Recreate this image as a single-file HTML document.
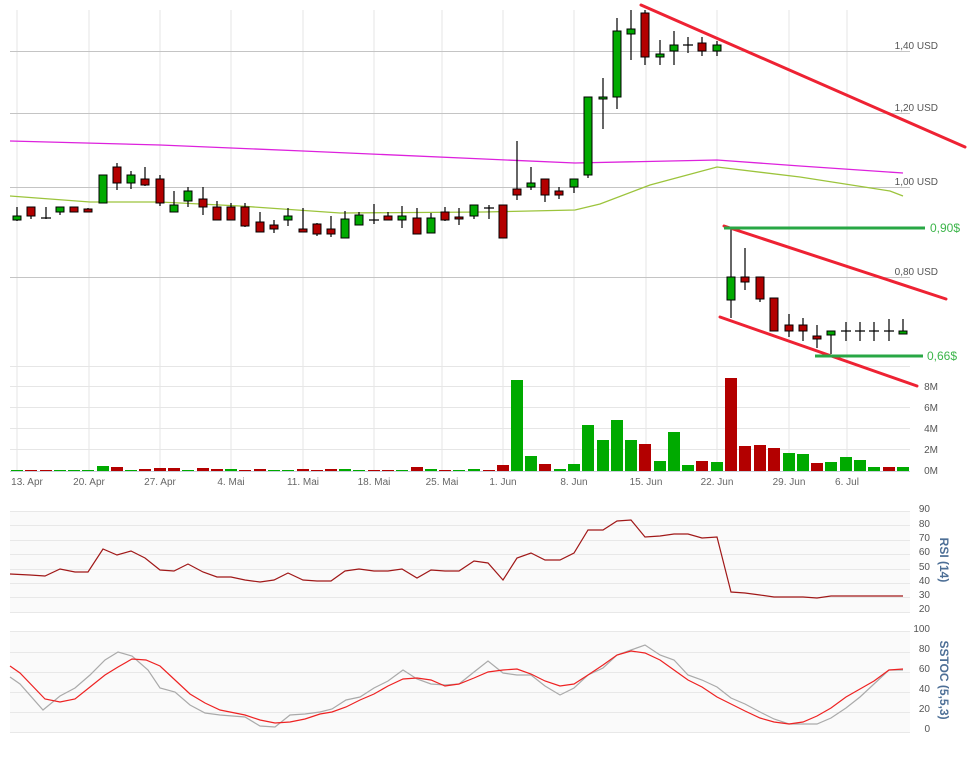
<!DOCTYPE html>
<html><head><meta charset="utf-8"><style>
html,body{margin:0;padding:0;background:#fff;}
svg{display:block;font-family:"Liberation Sans",sans-serif;}
.ax{font-size:10px;fill:#555;}
.dl{font-size:10px;fill:#666;}
</style></head><body>
<svg width="968" height="765" viewBox="0 0 968 765" xmlns="http://www.w3.org/2000/svg">
<rect width="968" height="765" fill="#fff"/>
<!-- vertical grid -->
<g stroke="#eeeeee" stroke-width="1.5">
<line x1="17" y1="10" x2="17" y2="472"/><line x1="89" y1="10" x2="89" y2="472"/><line x1="160" y1="10" x2="160" y2="472"/><line x1="231" y1="10" x2="231" y2="472"/><line x1="303" y1="10" x2="303" y2="472"/><line x1="374" y1="10" x2="374" y2="472"/><line x1="442" y1="10" x2="442" y2="472"/><line x1="503" y1="10" x2="503" y2="472"/><line x1="574" y1="10" x2="574" y2="472"/><line x1="646" y1="10" x2="646" y2="472"/><line x1="717" y1="10" x2="717" y2="472"/><line x1="789" y1="10" x2="789" y2="472"/><line x1="847" y1="10" x2="847" y2="472"/>
</g>
<!-- price grid -->
<g stroke="#c4c4c4" stroke-width="1">
<line x1="10" y1="51.5" x2="910" y2="51.5"/><line x1="10" y1="113.5" x2="910" y2="113.5"/><line x1="10" y1="187.5" x2="910" y2="187.5"/><line x1="10" y1="277.5" x2="910" y2="277.5"/>
</g>
<g class="ax" text-anchor="end">
<text x="938" y="49">1,40 USD</text><text x="938" y="111">1,20 USD</text><text x="938" y="185">1,00 USD</text><text x="938" y="275">0,80 USD</text>
</g>
<!-- volume grid -->
<g stroke="#e6e6e6" stroke-width="1">
<line x1="10" y1="366.5" x2="910" y2="366.5"/><line x1="10" y1="386.5" x2="910" y2="386.5"/><line x1="10" y1="407.5" x2="910" y2="407.5"/><line x1="10" y1="428.5" x2="910" y2="428.5"/><line x1="10" y1="449.5" x2="910" y2="449.5"/>
</g>
<line x1="10" y1="471.5" x2="910" y2="471.5" stroke="#c8d0dc"/>
<g class="ax" text-anchor="end">
<text x="938" y="390">8M</text><text x="938" y="411">6M</text><text x="938" y="432">4M</text><text x="938" y="453">2M</text><text x="938" y="474">0M</text>
</g>
<!-- MAs -->
<polyline fill="none" stroke="#dd22dd" stroke-width="1.3" points="10,141 160,145 303,151 484,159 575,163 717,160 800,166 903,173"/>
<polyline fill="none" stroke="#9cc43c" stroke-width="1.3" points="10,196 90,202 160,202 240,206 340,213 484,212 575,210 600,204 650,185 717,167 800,177 890,191 903,196"/>
<!-- volumes -->
<g>
<rect x="11" y="470" width="12" height="1" fill="#00aa00"/><rect x="25" y="470" width="12" height="1" fill="#b30000"/><rect x="40" y="470" width="12" height="1" fill="#b30000"/><rect x="54" y="470" width="12" height="1" fill="#00aa00"/><rect x="68" y="470" width="12" height="1" fill="#00aa00"/><rect x="82" y="470" width="12" height="1" fill="#00aa00"/>
<rect x="97" y="466" width="12" height="5" fill="#00aa00"/><rect x="111" y="467" width="12" height="4" fill="#b30000"/><rect x="125" y="470" width="12" height="1" fill="#00aa00"/><rect x="139" y="469" width="12" height="2" fill="#b30000"/><rect x="154" y="468" width="12" height="3" fill="#b30000"/><rect x="168" y="468" width="12" height="3" fill="#b30000"/><rect x="182" y="470" width="12" height="1" fill="#00aa00"/><rect x="197" y="468" width="12" height="3" fill="#b30000"/><rect x="211" y="469" width="12" height="2" fill="#b30000"/><rect x="225" y="469" width="12" height="2" fill="#00aa00"/><rect x="239" y="470" width="12" height="1" fill="#b30000"/><rect x="254" y="469" width="12" height="2" fill="#b30000"/><rect x="268" y="470" width="12" height="1" fill="#00aa00"/><rect x="282" y="470" width="12" height="1" fill="#00aa00"/><rect x="297" y="469" width="12" height="2" fill="#b30000"/><rect x="311" y="470" width="12" height="1" fill="#b30000"/><rect x="325" y="469" width="12" height="2" fill="#b30000"/><rect x="339" y="469" width="12" height="2" fill="#00aa00"/><rect x="353" y="470" width="12" height="1" fill="#00aa00"/><rect x="368" y="470" width="12" height="1" fill="#b30000"/><rect x="382" y="470" width="12" height="1" fill="#b30000"/><rect x="396" y="470" width="12" height="1" fill="#00aa00"/><rect x="411" y="467" width="12" height="4" fill="#b30000"/><rect x="425" y="469" width="12" height="2" fill="#00aa00"/><rect x="439" y="470" width="12" height="1" fill="#b30000"/><rect x="453" y="470" width="12" height="1" fill="#00aa00"/><rect x="468" y="469" width="12" height="2" fill="#00aa00"/><rect x="483" y="470" width="12" height="1" fill="#b30000"/>
<rect x="497" y="465" width="12" height="6" fill="#b30000"/><rect x="511" y="380" width="12" height="91" fill="#00aa00"/><rect x="525" y="456" width="12" height="15" fill="#00aa00"/><rect x="539" y="464" width="12" height="7" fill="#b30000"/><rect x="554" y="469" width="12" height="2" fill="#00aa00"/><rect x="568" y="464" width="12" height="7" fill="#00aa00"/><rect x="582" y="425" width="12" height="46" fill="#00aa00"/><rect x="597" y="440" width="12" height="31" fill="#00aa00"/><rect x="611" y="420" width="12" height="51" fill="#00aa00"/><rect x="625" y="440" width="12" height="31" fill="#00aa00"/><rect x="639" y="444" width="12" height="27" fill="#b30000"/><rect x="654" y="461" width="12" height="10" fill="#00aa00"/><rect x="668" y="432" width="12" height="39" fill="#00aa00"/><rect x="682" y="465" width="12" height="6" fill="#00aa00"/><rect x="696" y="461" width="12" height="10" fill="#b30000"/><rect x="711" y="462" width="12" height="9" fill="#00aa00"/><rect x="725" y="378" width="12" height="93" fill="#b30000"/><rect x="739" y="446" width="12" height="25" fill="#b30000"/><rect x="754" y="445" width="12" height="26" fill="#b30000"/><rect x="768" y="448" width="12" height="23" fill="#b30000"/><rect x="783" y="453" width="12" height="18" fill="#00aa00"/><rect x="797" y="454" width="12" height="17" fill="#00aa00"/><rect x="811" y="463" width="12" height="8" fill="#b30000"/><rect x="825" y="462" width="12" height="9" fill="#00aa00"/><rect x="840" y="457" width="12" height="14" fill="#00aa00"/><rect x="854" y="460" width="12" height="11" fill="#00aa00"/><rect x="868" y="467" width="12" height="4" fill="#00aa00"/><rect x="883" y="467" width="12" height="4" fill="#b30000"/><rect x="897" y="467" width="12" height="4" fill="#00aa00"/>
</g>
<!-- wicks -->
<path stroke="#000" stroke-width="1.2" fill="none" d="M17,207V221M31,207V219M46,207V219M60,207V215M74,207V212M88,208V212M103,175V203M117,163V190M131,171V189M145,167V186M160,175V206M174,191V212M188,187V207M203,187V215M217,201V220M231,203V220M245,203V227M260,212V232M274,220V233M288,208V226M303,208V232M317,223V236M331,216V237M345,211V238M359,212V225M374,204V224M388,212V220M402,206V228M417,208V234M431,213V233M445,207V221M459,208V225M474,205V219M489,205V219M503,205V238M517,141V200M531,167V190M545,179V202M559,187V199M574,179V193M588,97V178M603,78V129M617,18V109M631,10V60M645,10V65M660,40V65M674,31V65M688,37V53M702,37V56M717,41V56M731,228V318M745,248V290M760,277V302M774,298V331M789,314V337M803,318V341M817,325V348M831,331V354M846,322V341M860,322V341M874,322V341M889,319V341M903,319V334"/>
<!-- dojis -->
<path stroke="#000" stroke-width="1.2" d="M41,218H51M369,220H379M484,208H494M683,45H693M841,331H851M855,331H865M869,331H879M884,331H894"/>
<!-- bodies -->
<g stroke="#000" stroke-width="1">
<g fill="#00aa00">
<rect x="13" y="216" width="8" height="4"/><rect x="56" y="207" width="8" height="5"/><rect x="99" y="175" width="8" height="28"/><rect x="127" y="175" width="8" height="8"/><rect x="170" y="205" width="8" height="7"/><rect x="184" y="191" width="8" height="10"/><rect x="284" y="216" width="8" height="4"/><rect x="341" y="219" width="8" height="19"/><rect x="355" y="215" width="8" height="10"/><rect x="398" y="216" width="8" height="4"/><rect x="427" y="218" width="8" height="15"/><rect x="470" y="205" width="8" height="11"/><rect x="527" y="183" width="8" height="4"/><rect x="570" y="179" width="8" height="8"/><rect x="584" y="97" width="8" height="78"/><rect x="599" y="97" width="8" height="2"/><rect x="613" y="31" width="8" height="66"/><rect x="627" y="29" width="8" height="5"/><rect x="656" y="54" width="8" height="3"/><rect x="670" y="45" width="8" height="6"/><rect x="713" y="45" width="8" height="6"/><rect x="727" y="277" width="8" height="23"/><rect x="827" y="331" width="8" height="4"/><rect x="899" y="331" width="8" height="3"/>
</g>
<g fill="#b30000">
<rect x="27" y="207" width="8" height="9"/><rect x="70" y="207" width="8" height="5"/><rect x="84" y="209" width="8" height="3"/><rect x="113" y="167" width="8" height="16"/><rect x="141" y="179" width="8" height="6"/><rect x="156" y="179" width="8" height="24"/><rect x="199" y="199" width="8" height="8"/><rect x="213" y="207" width="8" height="13"/><rect x="227" y="207" width="8" height="13"/><rect x="241" y="207" width="8" height="19"/><rect x="256" y="222" width="8" height="10"/><rect x="270" y="225" width="8" height="4"/><rect x="299" y="229" width="8" height="3"/><rect x="313" y="224" width="8" height="10"/><rect x="327" y="229" width="8" height="5"/><rect x="384" y="216" width="8" height="4"/><rect x="413" y="218" width="8" height="16"/><rect x="441" y="212" width="8" height="8"/><rect x="455" y="217" width="8" height="2"/><rect x="499" y="205" width="8" height="33"/><rect x="513" y="189" width="8" height="6"/><rect x="541" y="179" width="8" height="16"/><rect x="555" y="191" width="8" height="4"/><rect x="641" y="13" width="8" height="44"/><rect x="698" y="43" width="8" height="8"/><rect x="741" y="277" width="8" height="5"/><rect x="756" y="277" width="8" height="22"/><rect x="770" y="298" width="8" height="33"/><rect x="785" y="325" width="8" height="6"/><rect x="799" y="325" width="8" height="6"/><rect x="813" y="336" width="8" height="3"/>
</g>
</g>
<!-- trend lines -->
<g stroke="#ee2233" stroke-width="3" stroke-linecap="round">
<line x1="641" y1="5" x2="965" y2="147"/>
<line x1="724" y1="226" x2="946" y2="299"/>
<line x1="720" y1="317" x2="917" y2="386"/>
</g>
<g stroke="#28a745" stroke-width="3">
<line x1="724" y1="228" x2="925" y2="228"/>
<line x1="815" y1="356" x2="923" y2="356"/>
</g>
<g font-size="12" fill="#3cb54a">
<text x="930" y="232">0,90$</text>
<text x="927" y="360">0,66$</text>
</g>
<!-- date labels -->
<g class="dl" text-anchor="middle">
<text x="27" y="485">13. Apr</text><text x="89" y="485">20. Apr</text><text x="160" y="485">27. Apr</text><text x="231" y="485">4. Mai</text><text x="303" y="485">11. Mai</text><text x="374" y="485">18. Mai</text><text x="442" y="485">25. Mai</text><text x="503" y="485">1. Jun</text><text x="574" y="485">8. Jun</text><text x="646" y="485">15. Jun</text><text x="717" y="485">22. Jun</text><text x="789" y="485">29. Jun</text><text x="847" y="485">6. Jul</text>
</g>
<!-- RSI pane -->
<rect x="10" y="511" width="900" height="101" fill="#fafafa"/>
<g stroke="#e8e8e8" stroke-width="1">
<line x1="10" y1="511.5" x2="910" y2="511.5"/><line x1="10" y1="525.5" x2="910" y2="525.5"/><line x1="10" y1="540.5" x2="910" y2="540.5"/><line x1="10" y1="554.5" x2="910" y2="554.5"/><line x1="10" y1="569.5" x2="910" y2="569.5"/><line x1="10" y1="583.5" x2="910" y2="583.5"/><line x1="10" y1="597.5" x2="910" y2="597.5"/><line x1="10" y1="612.5" x2="910" y2="612.5"/>
</g>
<g class="ax" font-size="11" text-anchor="end">
<text x="930" y="512">90</text><text x="930" y="527">80</text><text x="930" y="541">70</text><text x="930" y="555">60</text><text x="930" y="570">50</text><text x="930" y="584">40</text><text x="930" y="598">30</text><text x="930" y="612">20</text>
</g>
<polyline fill="none" stroke="#a01818" stroke-width="1.2" points="10,574 30,575 45,576 60,569 75,572 88,572 103,549 117,555 131,551 145,558 160,570 174,571 188,564 203,572 217,577 231,577 245,580 260,582 274,580 288,573 303,580 317,581 331,581 345,571 359,569 374,571 388,571 402,569 417,578 431,570 445,571 459,571 474,561 488,563 503,580 517,558 531,553 545,560 560,560 574,553 588,530 603,530 617,521 631,520 645,537 660,536 674,534 688,534 702,538 717,537 731,592 745,593 760,595 774,597 789,597 803,597 817,598 831,596 846,596 860,596 874,596 889,596 903,596"/>
<text transform="translate(940,560) rotate(90)" text-anchor="middle" font-size="12" font-weight="bold" fill="#4d6f96">RSI (14)</text>
<!-- Stoch pane -->
<rect x="10" y="631" width="900" height="101" fill="#fafafa"/>
<g stroke="#e8e8e8" stroke-width="1">
<line x1="10" y1="631.5" x2="910" y2="631.5"/><line x1="10" y1="652.5" x2="910" y2="652.5"/><line x1="10" y1="672.5" x2="910" y2="672.5"/><line x1="10" y1="692.5" x2="910" y2="692.5"/><line x1="10" y1="712.5" x2="910" y2="712.5"/><line x1="10" y1="732.5" x2="910" y2="732.5"/>
</g>
<g class="ax" font-size="11" text-anchor="end">
<text x="930" y="632">100</text><text x="930" y="652">80</text><text x="930" y="672">60</text><text x="930" y="692">40</text><text x="930" y="712">20</text><text x="930" y="732">0</text>
</g>
<polyline fill="none" stroke="#aaaaaa" stroke-width="1.2" points="10,677 20,684 43,710 60,696 75,688 90,675 105,660 118,652 132,656 148,670 160,688 175,692 190,705 205,713 220,715 245,717 260,726 275,727 290,715 305,714 320,712 332,709 346,700 360,697 374,688 388,681 403,670 417,679 431,684 445,685 459,684 474,672 488,661 503,673 517,675 531,675 545,686 560,695 574,688 588,675 603,668 617,655 631,650 645,645 660,655 674,660 688,675 702,680 717,687 731,698 745,704 760,712 774,719 789,724 803,724 817,724 831,718 846,708 860,697 874,684 889,670 903,670"/>
<polyline fill="none" stroke="#ee2222" stroke-width="1.2" points="10,666 20,673 45,699 60,702 75,699 90,687 105,675 118,667 132,659 146,660 160,666 175,680 190,694 205,703 220,710 245,715 260,720 275,723 290,722 305,719 320,714 332,712 346,707 360,700 374,694 388,686 403,679 417,678 431,680 445,686 459,684 474,678 488,672 503,670 517,669 531,674 545,681 560,686 574,684 588,675 603,665 617,655 631,651 645,653 660,660 674,670 688,680 702,687 717,697 731,704 745,711 760,718 774,722 789,724 803,722 817,716 831,708 846,697 860,689 874,681 889,670 903,669"/>
<text transform="translate(940,680) rotate(90)" text-anchor="middle" font-size="12" font-weight="bold" fill="#4d6f96">SSTOC (5,5,3)</text>
</svg>
</body></html>
